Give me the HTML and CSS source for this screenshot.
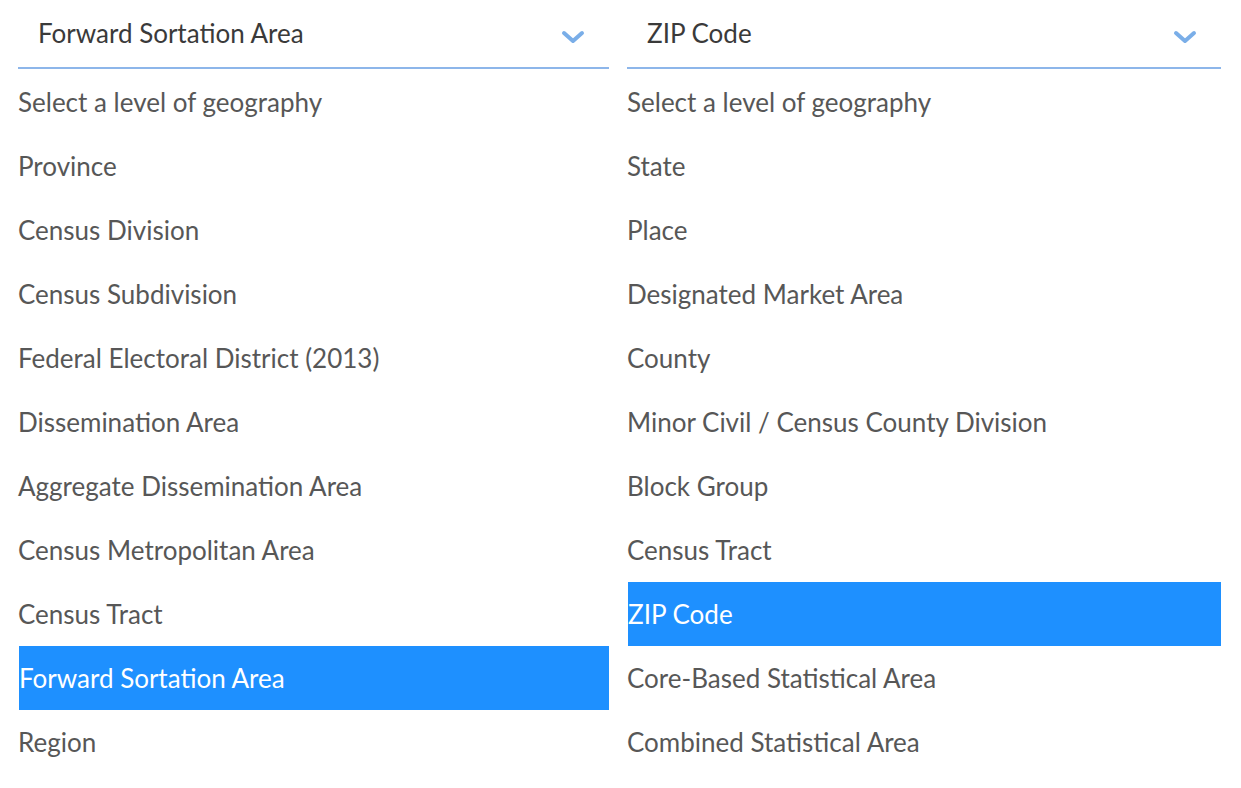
FILE: index.html
```html
<!DOCTYPE html>
<html>
<head>
<meta charset="utf-8">
<link rel="stylesheet" href="styles.css">
</head>
<body>
<div class="page">
  <div class="select">
    <div class="control">
      <span class="value">Forward Sortation Area</span>
      <svg class="chev" width="24" height="14" viewBox="0 0 24 14"><path d="M3 3 L12 11 L21 3" fill="none" stroke="#7aaee8" stroke-width="4" stroke-linecap="round" stroke-linejoin="round"/></svg>
    </div>
    <ul class="options">
      <li>Select a level of geography</li>
      <li>Province</li>
      <li>Census Division</li>
      <li>Census Subdivision</li>
      <li>Federal Electoral District (2013)</li>
      <li>Dissemination Area</li>
      <li>Aggregate Dissemination Area</li>
      <li>Census Metropolitan Area</li>
      <li>Census Tract</li>
      <li class="active">Forward Sortation Area</li>
      <li>Region</li>
    </ul>
  </div>
  <div class="select">
    <div class="control">
      <span class="value">ZIP Code</span>
      <svg class="chev" width="24" height="14" viewBox="0 0 24 14"><path d="M3 3 L12 11 L21 3" fill="none" stroke="#7aaee8" stroke-width="4" stroke-linecap="round" stroke-linejoin="round"/></svg>
    </div>
    <ul class="options">
      <li>Select a level of geography</li>
      <li>State</li>
      <li>Place</li>
      <li>Designated Market Area</li>
      <li>County</li>
      <li>Minor Civil / Census County Division</li>
      <li>Block Group</li>
      <li>Census Tract</li>
      <li class="active">ZIP Code</li>
      <li>Core-Based Statistical Area</li>
      <li>Combined Statistical Area</li>
    </ul>
  </div>
</div>
</body>
</html>
```
FILE: styles.css
```css
html, body {
  margin: 0;
  padding: 0;
  background: #ffffff;
}
body {
  font-family: "Lato", "Open Sans", sans-serif;
  font-size: 26px;
  color: #575757;
}
.page {
  display: grid;
  grid-template-columns: 591px 594px;
  column-gap: 18px;
  padding-left: 18px;
}
.control {
  display: flex;
  align-items: center;
  justify-content: space-between;
  padding: 0 24px 0 20px;
  box-sizing: border-box;
  height: 69px;
  border-bottom: 2px solid #8db6ea;
}
.value {
  color: #3a3a3a;
  margin-top: -2px;
}
.chev {
  margin-top: 6px;
}
.options {
  list-style: none;
  margin: 1px 0 0 0;
  padding: 0;
}
.options li {
  height: 64px;
  box-sizing: border-box;
  padding-top: 1px;
  line-height: 63px;
  white-space: nowrap;
}
.options li.active {
  background: #1e90ff;
  color: #ffffff;
  margin-left: 1px;
}
```
